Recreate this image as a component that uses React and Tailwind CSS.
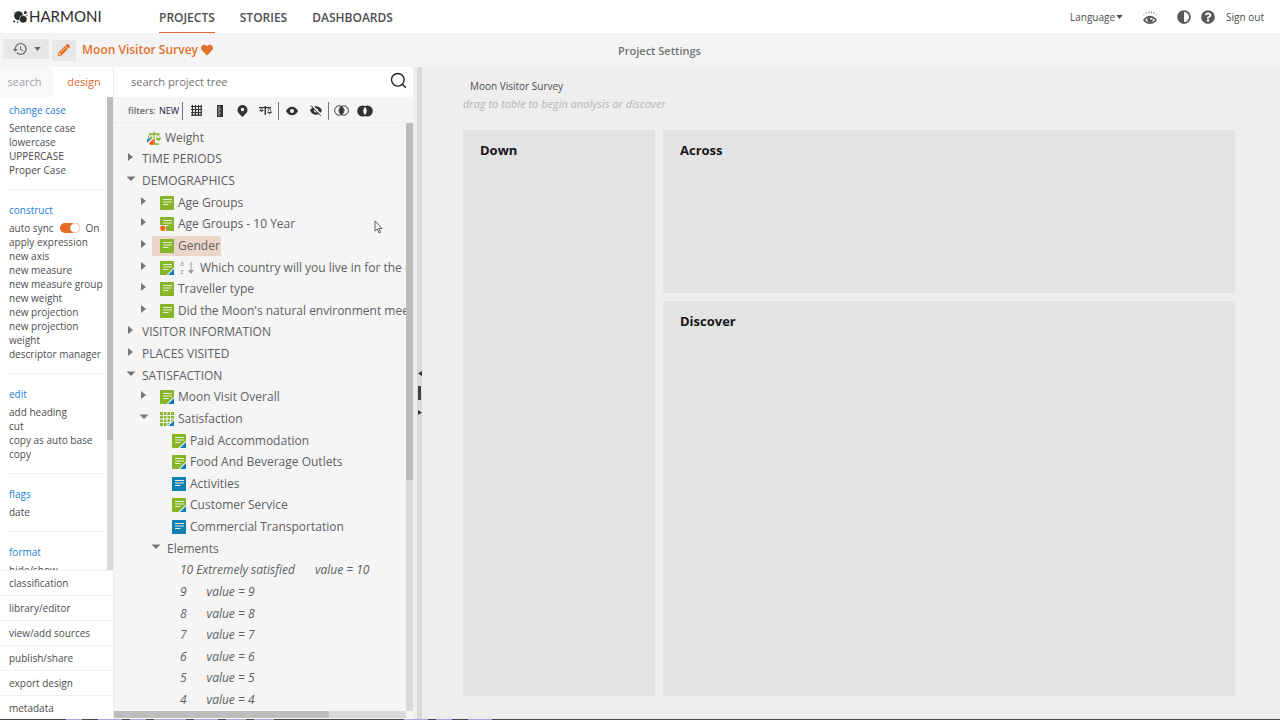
import { useState } from "react";
import { FaAdjust, FaHeart, FaPencilAlt, FaQuestionCircle } from "react-icons/fa";
import { MdHistory } from "react-icons/md";

const designGroups = [
  {
    title: "change case",
    items: ["Sentence case", "lowercase", "UPPERCASE", "Proper Case"],
  },
  {
    title: "construct",
    sync: true,
    items: [
      "apply expression",
      "new axis",
      "new measure",
      "new measure group",
      "new weight",
      "new projection",
      "new projection weight",
      "descriptor manager",
    ],
  },
  { title: "edit", items: ["add heading", "cut", "copy as auto base", "copy"] },
  { title: "flags", items: ["date"] },
  { title: "format", items: ["hide/show"] },
];

const sections = [
  "classification",
  "library/editor",
  "view/add sources",
  "publish/share",
  "export design",
  "metadata",
];

const tree = [
  { label: "Weight", pad: "pl-[25px]", icon: "weight" },
  { label: "TIME PERIODS", pad: "pl-[13px]", caret: "closed" },
  { label: "DEMOGRAPHICS", pad: "pl-[13px]", caret: "open" },
  { label: "Age Groups", pad: "pl-[26px]", caret: "closed", icon: "green" },
  { label: "Age Groups - 10 Year", pad: "pl-[26px]", caret: "closed", icon: "dot" },
  { label: "Gender", pad: "pl-[26px]", caret: "closed", icon: "green", selected: true },
  {
    label: "Which country will you live in for the next year?",
    pad: "pl-[26px]",
    caret: "closed",
    icon: "corner",
    sorted: true,
  },
  { label: "Traveller type", pad: "pl-[26px]", caret: "closed", icon: "green" },
  {
    label: "Did the Moon's natural environment meet your expectations?",
    pad: "pl-[26px]",
    caret: "closed",
    icon: "green",
  },
  { label: "VISITOR INFORMATION", pad: "pl-[13px]", caret: "closed" },
  { label: "PLACES VISITED", pad: "pl-[13px]", caret: "closed" },
  { label: "SATISFACTION", pad: "pl-[13px]", caret: "open" },
  { label: "Moon Visit Overall", pad: "pl-[26px]", caret: "closed", icon: "corner" },
  { label: "Satisfaction", pad: "pl-[26px]", caret: "open", icon: "grid" },
  { label: "Paid Accommodation", pad: "pl-[50px]", icon: "corner" },
  { label: "Food And Beverage Outlets", pad: "pl-[50px]", icon: "corner" },
  { label: "Activities", pad: "pl-[50px]", icon: "blue" },
  { label: "Customer Service", pad: "pl-[50px]", icon: "corner" },
  { label: "Commercial Transportation", pad: "pl-[50px]", icon: "blue" },
  { label: "Elements", pad: "pl-[38px]", caret: "open" },
  { label: "10 Extremely satisfied", pad: "pl-[63px]", value: 10 },
  { label: "9", pad: "pl-[63px]", value: 9 },
  { label: "8", pad: "pl-[63px]", value: 8 },
  { label: "7", pad: "pl-[63px]", value: 7 },
  { label: "6", pad: "pl-[63px]", value: 6 },
  { label: "5", pad: "pl-[63px]", value: 5 },
  { label: "4", pad: "pl-[63px]", value: 4 },
];

function Logo() {
  return (
    <svg className="h-[14px] w-[15px]" viewBox="0 0 15 14" fill="#2b2b2d">
      <circle cx="5.600" cy="5.800" r="4.500" />
      <circle cx="10.200" cy="9.200" r="3.800" stroke="#fff" strokeWidth="0.500" />
      <circle cx="12.300" cy="2.600" r="1.500" />
      <circle cx="1.200" cy="11.500" r="1" />
      <circle cx="4.600" cy="12.300" r="0.800" />
      <circle cx="14" cy="5.200" r="0.600" />
      <circle cx="1" cy="2.200" r="0.500" />
    </svg>
  );
}

function CaretDown({ className }) {
  return (
    <svg className={className} viewBox="0 0 8 5" fill="currentColor">
      <path d="M0 0h8L4 5z" />
    </svg>
  );
}

function LashEye() {
  return (
    <svg className="h-[15px] w-[14px]" viewBox="0 0 15 15" fill="none" stroke="#58585a">
      <path d="M1 10.200C3 7.400 5.200 6.400 7.500 6.400s4.500 1 6.500 3.800c-2 2.500-4.200 3.500-6.500 3.500S3 12.700 1 10.200z" strokeWidth="1.600" />
      <circle cx="7.500" cy="9.800" r="3" fill="#58585a" stroke="none" />
      <circle cx="8.600" cy="8.800" r="1.100" fill="#fff" stroke="none" />
      <path d="M1.200 5.200.5 4M3.800 3.600 3.100 1.800M6.400 3V1M8.900 3V1M11.300 3.600 12 1.800M13.700 5.200l.8-1.200" strokeWidth="0.800" />
    </svg>
  );
}

function NodeIcon({ kind }) {
  if (kind === "weight") {
    return (
      <svg className="h-[14px] w-[14px] shrink-0" viewBox="0 0 14 14" fill="none">
        <path d="M7 .5V12M2 3h10.500M6 13h6" stroke="#7fb026" strokeWidth="1.300" />
        <path d="M11.300 3 9.300 7.500h4.200z" stroke="#7fb026" strokeWidth="0.700" />
        <path d="M8.900 7.500h5c-.3 1.500-1.200 2-2.500 2s-2.200-.5-2.500-2z" fill="#7fb026" />
        <path d="M2.700 3 1 6.500h4z" stroke="#7fb026" strokeWidth="0.700" />
        <path d="M0 8c2-.5 3.500-1 5.500-1.500L1 12 0 11z" fill="#1f8fd0" />
        <circle cx="4.800" cy="11" r="3" fill="#ee6a1f" />
        <path d="M.5 12.500 6.500 6.800" stroke="#fff" strokeWidth="1.100" />
      </svg>
    );
  }

  if (kind === "grid") {
    return (
      <svg className="h-[14px] w-[14px] shrink-0" viewBox="0 0 14 14">
        <path d="M0 0h14v14H0z" fill="#86b528" />
        <path d="M3.500 0v14M7 0v14M10.500 0v14M0 3.500h14M0 7h14M0 10.500h14" stroke="#f4f4f4" strokeWidth="1" />
        <path d="M14 7v7H7z" fill="#f4f4f4" />
        <path d="M14 8.500V14H8.500z" fill="#0c7fc2" />
      </svg>
    );
  }

  return (
    <svg className="h-[14px] w-[14px] shrink-0" viewBox="0 0 14 14">
      <rect width="14" height="14" rx="0.500" fill={kind === "blue" ? "#0d80b4" : "#86b528"} />
      <path d="M3 3.500h9M3 6h9M3 8.500h5.500" stroke="#e6f0d0" strokeWidth="1" />
      {kind === "corner" && (
        <>
          <path d="M14 6.500V14H6.500z" fill="#f4f4f4" />
          <path d="M14 8V14H8z" fill="#0c7fc2" />
        </>
      )}
      {kind === "dot" && (
        <>
          <path d="M0 8h6v6H0z" fill="#f4f4f4" />
          <circle cx="2.800" cy="11.200" r="2.700" fill="#ee6a1f" />
        </>
      )}
    </svg>
  );
}

function TreeRow({ node, selected, onSelect }) {
  return (
    <li className={`flex min-h-0 flex-1 items-center ${node.pad}`}>
      {node.caret && (
        <svg className="mb-1 h-[8px] w-3 shrink-0 text-[#77777a]" viewBox="0 0 12 8" fill="currentColor">
          {node.caret === "open" ? <path d="M-.5 1.500h9L4 6z" /> : <path d="M1 0l5 4-5 4z" />}
        </svg>
      )}
      <button
        onClick={onSelect}
        className={`flex h-5 items-center gap-1 whitespace-nowrap ${node.icon ? "pl-2" : "pl-[3px]"} ${
          node.value ? "italic" : ""
        } ${selected ? "bg-[#ecd6c9] pr-px" : ""}`}
      >
        {node.icon && <NodeIcon kind={node.icon} />}
        {node.sorted && (
          <span className="mx-[2px] flex items-center gap-1 text-[#98989a]">
            <span className="flex flex-col text-[7px] leading-[8px]">
              <span>a</span>
              <span>z</span>
            </span>
            <svg className="h-[12px] w-[6px]" viewBox="0 0 6 12" fill="currentColor">
              <path d="M2.500 0h1v8H6l-3 4-3-4h2.500z" />
            </svg>
          </span>
        )}
        <span>{node.label}</span>
        {node.value && <span className="ml-4">value = {node.value}</span>}
      </button>
    </li>
  );
}

function FilterButton({ label, children }) {
  return (
    <button aria-label={label} className="flex w-[17px] justify-center text-[#333335]">
      {children}
    </button>
  );
}

function Filters() {
  return (
    <div className="flex h-[26px] shrink-0 items-center border-b border-[#ececee] pl-[14px] pt-[2px] text-[9px]">
      <span className="w-[31px] font-semibold text-[#6b6b6e]">filters:</span>
      <button className="w-[23px] text-left text-[#2d2038]">NEW</button>
      <span className="h-[18px] w-px bg-[#77777a]" />
      <div className="flex flex-1 items-center">
        <div className="flex w-[95px] items-center justify-between pl-[5px] pr-1">
          <FilterButton label="Grids">
            <svg className="h-[11px] w-[11px]" viewBox="0 0 11 11" fill="none" stroke="currentColor">
              <path d="M1.500 0v11M4.500 0v11M7.500 0v11M10.200 0v11M0 1.500h11M0 4.500h11M0 7.500h11M0 10.200h11" strokeWidth="1.200" />
            </svg>
          </FilterButton>
          <FilterButton label="Measures">
            <svg className="h-[12px] w-[6px]" viewBox="0 0 6 12">
              <path d="M0 0h6v12H0z" fill="currentColor" />
              <path d="M1 2h2M1 4h3M1 6h2M1 8h3M1 10h2" stroke="#ddd" strokeWidth="0.800" />
            </svg>
          </FilterButton>
          <FilterButton label="Locations">
            <svg className="h-[12px] w-[11px]" viewBox="0 0 11 12" fill="currentColor">
              <path d="M5.500 0a5 5 0 0 1 5 4.900c0 2.500-1.700 3.600-5 7.100C2.200 8.500.5 7.400.5 4.900a5 5 0 0 1 5-4.900z" />
              <circle cx="5.500" cy="4.500" r="1.700" fill="#f4f4f4" />
            </svg>
          </FilterButton>
          <FilterButton label="Weights">
            <svg className="h-[10px] w-[13px]" viewBox="0 0 13 10" fill="none" stroke="currentColor">
              <path d="M0 1.600h12M6.300 0v9" strokeWidth="1.400" />
              <path d="M2.500 2 .7 4.500h3.600zM10.500 2 8.500 6.500h4z" strokeWidth="0.700" />
              <path d="M.5 4.500h4L2.500 6zM8.300 6.500h4.500L10.500 8z" fill="currentColor" stroke="none" />
            </svg>
          </FilterButton>
        </div>
        <span className="h-[18px] w-px bg-[#77777a]" />
        <div className="flex w-[49px] items-center justify-between px-1">
          <FilterButton label="Visible">
            <svg className="h-[10px] w-[12px]" viewBox="0 0 12 10" fill="currentColor">
              <path d="M0 5C1.500 2 3.600.8 6 .8S10.500 2 12 5C10.500 8 8.400 9.200 6 9.200S1.500 8 0 5z" />
              <circle cx="6" cy="5" r="2" fill="#f4f4f4" />
            </svg>
          </FilterButton>
          <FilterButton label="Hidden">
            <svg className="h-[11px] w-[12px]" viewBox="0 0 12 11" fill="currentColor">
              <path d="M0 5.500C1.500 2.500 3.600 1.300 6 1.300s4.500 1.200 6 4.200c-1.500 3-3.600 4.200-6 4.200S1.500 8.500 0 5.500z" />
              <circle cx="6" cy="5.500" r="2" fill="#f4f4f4" />
              <path d="M1.700.3 11.500 10" stroke="#f4f4f4" strokeWidth="1.600" />
              <path d="M.8.5 10.800 10.800" stroke="currentColor" strokeWidth="1" />
            </svg>
          </FilterButton>
        </div>
        <span className="h-[18px] w-px bg-[#77777a]" />
        <div className="flex items-center gap-[6px] pl-1">
          <FilterButton label="Intersection">
            <svg className="h-[11px] w-[15px] shrink-0" viewBox="0 0 15 11">
              <path d="M7.500 1.400a5 5 0 0 1 0 8.200 5 5 0 0 1 0-8.200z" fill="currentColor" />
              <circle cx="5.300" cy="5.500" r="4.700" fill="none" stroke="currentColor" />
              <circle cx="9.700" cy="5.500" r="4.700" fill="none" stroke="currentColor" />
            </svg>
          </FilterButton>
          <FilterButton label="Difference">
            <svg className="h-[12px] w-[16px] shrink-0" viewBox="0 0 16 12">
              <circle cx="5.700" cy="6" r="5.500" fill="currentColor" />
              <circle cx="10.300" cy="6" r="5.500" fill="currentColor" />
              <path d="M8 1.800a6.500 6.500 0 0 1 0 8.400 6.500 6.500 0 0 1 0-8.400z" fill="#f4f4f4" />
            </svg>
          </FilterButton>
        </div>
      </div>
    </div>
  );
}

function DesignPanel() {
  const [sync, setSync] = useState(true);

  return (
    <aside className="flex w-[113px] shrink-0 flex-col bg-white text-[10px] leading-[14px] text-[#4c4c4f]">
      <div className="flex h-[30px] shrink-0 text-[11px]">
        <button className="w-[53px] bg-[#f8f8fa] pr-1 text-[#a2a2a5]">search</button>
        <button className="flex-1 pl-[2px] text-[#e3692b]">design</button>
      </div>

      <div className="flex min-h-0 flex-1">
        <div className="min-w-0 flex-1 overflow-hidden pl-2 pr-1">
          {designGroups.map((group) => (
            <section key={group.title} className="mb-[7px] border-b border-[#efeff1] pb-3 pl-px">
              <h2 className="mb-1 pt-[6px] text-[#1a80dd]">{group.title}</h2>
              {group.sync && (
                <label className="flex items-center whitespace-nowrap">
                  auto sync
                  <input
                    type="checkbox"
                    role="switch"
                    checked={sync}
                    onChange={() => setSync(!sync)}
                    className="mx-[6px] flex h-[10px] w-5 shrink-0 appearance-none justify-end rounded-full bg-[#e66a1f] before:h-[10px] before:w-[10px] before:rounded-full before:border before:border-[#f5e3d8] before:bg-white"
                  />
                  On
                </label>
              )}
              <ul>
                {group.items.map((item) => (
                  <li key={item}>
                    <button className="block text-left">{item}</button>
                  </li>
                ))}
              </ul>
            </section>
          ))}
        </div>
        <div className="w-[6px] shrink-0 bg-[#dadadb]">
          <div className="h-[343px] bg-[#bcbcbd]" />
        </div>
      </div>

      <ul className="h-[149px] shrink-0">
        {sections.map((item) => (
          <li key={item} className="h-[25px] border-t border-[#f0f0f5]">
            <button className="h-full w-full pl-[9px] text-left">{item}</button>
          </li>
        ))}
      </ul>
    </aside>
  );
}

function TreePanel() {
  const [selected, setSelected] = useState(5);

  return (
    <section className="relative flex w-[300px] shrink-0 flex-col border-l border-[#ececee] bg-[#f5f5f5]">
      <div className="flex h-[30px] shrink-0 items-center bg-white pl-[17px] pr-[6px]">
        <input
          type="text"
          aria-label="search project tree"
          placeholder="search project tree"
          className="min-w-0 flex-1 pt-px text-[11px] outline-none placeholder:text-[#707073]"
        />
        <button aria-label="Search" className="pb-[3px]">
          <svg className="h-[17px] w-[17px]" viewBox="0 0 17 17" fill="none" stroke="#222">
            <circle cx="7.800" cy="7.800" r="6.300" strokeWidth="1.400" />
            <path d="M12.300 12.300l3.500 3.500" strokeWidth="1.400" />
          </svg>
        </button>
      </div>
      <Filters />

      <div className="flex min-h-0 flex-1">
        <ul className="flex min-w-0 flex-1 flex-col overflow-hidden pt-1 text-[12px] text-[#606063]">
          {tree.map((node, i) => (
            <TreeRow key={node.label} node={node} selected={selected === i} onSelect={() => setSelected(i)} />
          ))}
        </ul>
        <div className="w-[7px] shrink-0 bg-[#d9d9da]">
          <div className="h-[357px] bg-[#bdbdbe]" />
        </div>
      </div>
      <div className="mb-px mr-[7px] h-[7px] shrink-0 bg-[#d9d9da]">
        <div className="h-full w-[215px] bg-[#bdbdbe]" />
      </div>

      {/* mouse pointer */}
      <svg className="absolute left-[260px] top-[153px] h-[14px] w-[9px]" viewBox="0 0 9 14">
        <path d="M1 1v10l2.300-2 1.700 4 1.500-.7L4.900 8.500H8z" fill="#fff" stroke="#4a4a4d" strokeWidth="0.900" />
      </svg>
    </section>
  );
}

function Splitter() {
  return (
    <div className="ml-1 flex w-[5px] shrink-0 flex-col items-center justify-center gap-[10px] bg-[#dadadd] text-[#333335]">
      <svg className="h-[5px] w-[4px]" viewBox="0 0 4 5" fill="currentColor">
        <path d="M4 0v5L0 2.500z" />
      </svg>
      <span className="h-[14px] w-[3px] bg-[#444447]" />
      <svg className="h-[5px] w-[4px]" viewBox="0 0 4 5" fill="currentColor">
        <path d="M0 0v5l4-2.500z" />
      </svg>
    </div>
  );
}

function DropZone({ title, className }) {
  return (
    <section className={`bg-[#e3e3e3] px-[17px] py-[11px] ${className}`}>
      <h2 className="text-[13px] leading-[18px] font-bold text-[#161618]">{title}</h2>
    </section>
  );
}

export default function App() {
  return (
    <div className="flex h-screen flex-col overflow-hidden bg-[#eeeeee] font-['Open_Sans','Noto_Sans',sans-serif]">
      <header className="flex h-[33px] shrink-0 items-center bg-white pl-[13px] pr-4 text-[#4d4d50]">
        <a href="#" className="flex w-[146px] items-center gap-px font-['Lato',sans-serif] text-[15px] text-[#2b2b2d]">
          <Logo />
          HARMONI
        </a>
        <nav className="flex h-full flex-1 gap-[25px] text-[12px] font-semibold">
          <a href="#" className="flex items-center border-b border-[#e3692b] pt-[3px]">PROJECTS</a>
          <a href="#" className="flex items-center border-b border-transparent pt-[3px]">STORIES</a>
          <a href="#" className="flex items-center border-b border-transparent pt-[3px]">DASHBOARDS</a>
        </nav>
        <div className="flex items-center pt-px text-[10px]">
          <button className="mr-5 flex items-center gap-px">
            Language
            <CaretDown className="h-[4px] w-[7px]" />
          </button>
          <button aria-label="Preview" className="mr-5">
            <LashEye />
          </button>
          <button aria-label="Contrast" className="mr-[10px]">
            <FaAdjust className="h-[14px] w-[14px] text-[#58585a]" />
          </button>
          <button aria-label="Help" className="mr-[11px]">
            <FaQuestionCircle className="h-[14px] w-[14px] text-[#58585a]" />
          </button>
          <a href="#">Sign out</a>
        </div>
      </header>

      <div className="flex h-[34px] shrink-0 items-center bg-[#f4f4f4] pl-[3px]">
        <button aria-label="History" className="mb-[3px] flex h-5 w-[46px] items-center justify-center gap-[6px] bg-[#e7e7e7] text-[#6a6a6d]">
          <MdHistory className="h-4 w-4" />
          <CaretDown className="h-[4px] w-[7px]" />
        </button>
        <button aria-label="Edit" className="ml-[3px] flex h-[21px] w-6 items-center justify-center bg-[#e7e7e7] text-[#e86c1d]">
          <FaPencilAlt className="h-3 w-3" />
        </button>
        <h1 className="ml-[6px] flex w-[536px] items-center gap-[3px] text-[12px] font-semibold text-[#e3702b]">
          Moon Visitor Survey
          <FaHeart className="h-3 w-3" />
        </h1>
        <p className="pt-[2px] text-[11px] font-semibold text-[#727275]">Project Settings</p>
      </div>

      <div className="flex min-h-0 flex-1">
        <DesignPanel />
        <TreePanel />
        <Splitter />

        <main className="flex min-w-0 flex-1 flex-col pb-[23px] pl-[41px] pr-[45px] pt-[10px]">
          <p className="pl-[7px] text-[10px] leading-[18px] text-[#4c4c4f]">Moon Visitor Survey</p>
          <p className="text-[11px] leading-[18px] text-[#b4b4b6] italic">
            drag to table to begin analysis or discover
          </p>
          <div className="mt-[17px] grid min-h-0 flex-1 grid-cols-[192px_1fr] grid-rows-[163px_1fr] gap-2">
            <DropZone title="Down" className="row-span-2" />
            <DropZone title="Across" className="" />
            <DropZone title="Discover" className="" />
          </div>
        </main>
      </div>

      {/* top edge of the window below */}
      <div className="flex h-px shrink-0 bg-[#4a4a4d]">
        <span className="ml-[66px] w-4 bg-[#b3a3dc]" />
        <span className="ml-4 w-6 bg-[#b3a3dc]" />
        <span className="ml-2 w-4 bg-[#b3a3dc]" />
        <span className="ml-2 w-8 bg-[#b3a3dc]" />
        <span className="ml-2 w-6 bg-[#b3a3dc]" />
        <span className="ml-2 w-5 bg-[#b3a3dc]" />
        <span className="ml-2 w-5 bg-[#b3a3dc]" />
        <span className="ml-[130px] w-6 bg-[#b3a3dc]" />
        <span className="ml-2 w-4 bg-[#b3a3dc]" />
        <span className="ml-4 w-6 bg-[#b3a3dc]" />
      </div>
    </div>
  );
}
